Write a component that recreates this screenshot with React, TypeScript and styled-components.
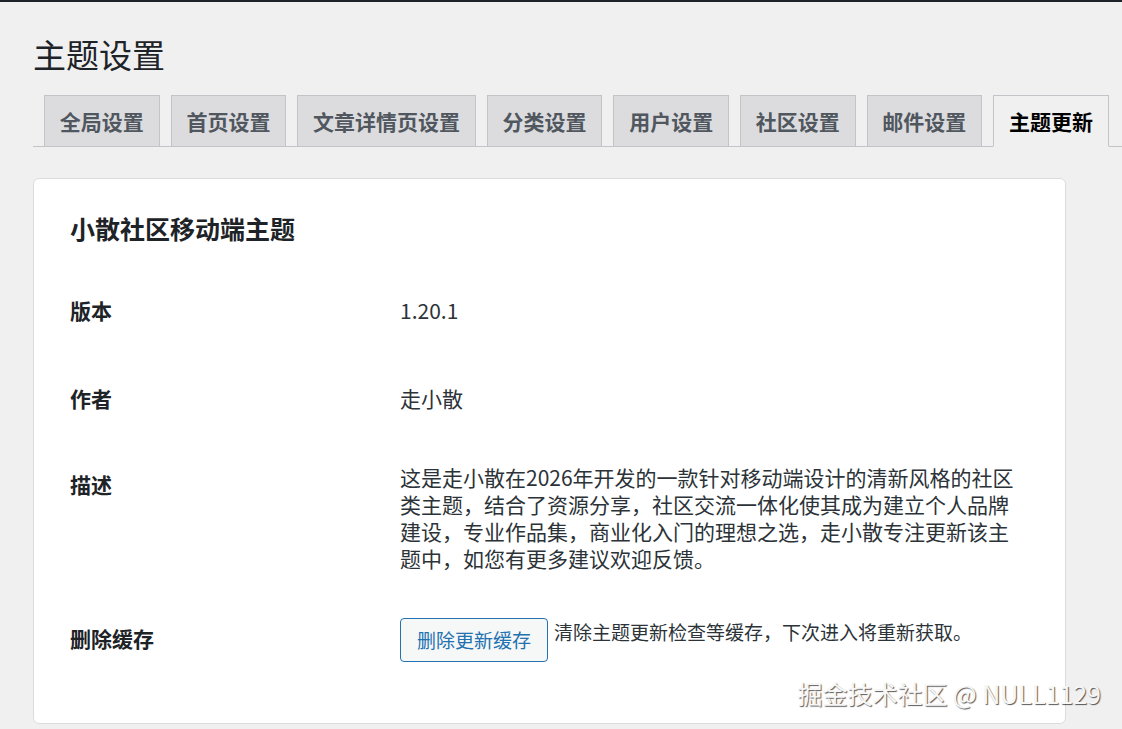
import styled, { createGlobalStyle } from "styled-components";

const GlobalStyle = createGlobalStyle`
  html, body {
    margin: 0;
    padding: 0;
    background: #f0f0f1;
  }
  body {
    font-family: "Noto Sans CJK SC", "Noto Sans", sans-serif;
    color: #2c3338;
  }
  * {
    box-sizing: border-box;
  }
`;

const tabs = [
  "全局设置",
  "首页设置",
  "文章详情页设置",
  "分类设置",
  "用户设置",
  "社区设置",
  "邮件设置",
  "主题更新",
];

const Page = styled.div`
  position: relative;
  min-height: 729px;
  border-top: 2px solid #1d2327;
  padding-left: 33px;
`;

const Heading = styled.h1`
  margin: 30px 0 19px;
  font-size: 33px;
  line-height: 44px;
  font-weight: 400;
  color: #1d2327;
`;

const TabBar = styled.nav`
  display: flex;
  border-bottom: 1px solid #c3c4c7;
`;

const Tab = styled.a<{ $active?: boolean }>`
  display: block;
  margin-left: 11px;
  margin-bottom: -1px;
  padding: 7px 14.8px;
  font-size: 21px;
  line-height: 36px;
  font-weight: 700;
  white-space: nowrap;
  color: ${(p) => (p.$active ? "#000000" : "#50575e")};
  background: ${(p) => (p.$active ? "#f0f0f1" : "#dcdcde")};
  border: 1px solid #c3c4c7;
  border-bottom-color: ${(p) => (p.$active ? "#f0f0f1" : "#c3c4c7")};
  cursor: pointer;
`;

const Card = styled.section`
  width: 1033px;
  margin-top: 31px;
  padding: 32px 36px 41px;
  background: #ffffff;
  border: 1px solid #dcdcde;
  border-radius: 6px;
`;

const CardTitle = styled.h2`
  margin: 0 0 21px;
  font-size: 25px;
  line-height: 34px;
  font-weight: 700;
  color: #1d2327;
`;

const Row = styled.div`
  display: grid;
  grid-template-columns: 330px 620px;
`;

const Label = styled.div<{ $top?: number }>`
  padding: ${(p) => p.$top ?? 30}px 0 30px;
  font-size: 21px;
  line-height: 28px;
  font-weight: 700;
  color: #1d2327;
`;

const Value = styled.div<{ $top: number }>`
  padding: ${(p) => p.$top}px 0;
  font-size: 21px;
  line-height: ${(p) => (p.$top === 30 ? 28 : 27)}px;
  color: #2c3338;
`;

const Actions = styled.div`
  display: flex;
  align-items: flex-start;
  padding-top: 24px;
`;

const Button = styled.button`
  height: 44px;
  padding: 0 16px;
  font-family: inherit;
  font-size: 19px;
  line-height: 42px;
  color: #2271b1;
  background: #f6f7f7;
  border: 1px solid #2271b1;
  border-radius: 4px;
  cursor: pointer;
`;

const Hint = styled.span`
  margin-left: 6px;
  font-size: 19px;
  line-height: 28px;
  color: #2c3338;
  white-space: nowrap;
`;

const Watermark = styled.div`
  position: absolute;
  right: 21px;
  top: 674px;
  font-size: 25px;
  line-height: 34px;
  color: #f7f7f7;
  text-shadow: 1px 1px 1px rgba(0, 0, 0, 0.65);
  white-space: nowrap;
`;

export default function App() {
  return (
    <>
      <GlobalStyle />
      <Page>
        <Heading>主题设置</Heading>
        <TabBar>
          {tabs.map((t) => (
            <Tab key={t} $active={t === "主题更新"}>
              {t}
            </Tab>
          ))}
        </TabBar>
        <Card>
          <CardTitle>小散社区移动端主题</CardTitle>
          <Row>
            <Label>版本</Label>
            <Value $top={30}>1.20.1</Value>
          </Row>
          <Row>
            <Label>作者</Label>
            <Value $top={30}>走小散</Value>
          </Row>
          <Row>
            <Label $top={28}>描述</Label>
            <Value $top={22}>
              这是走小散在2026年开发的一款针对移动端设计的清新风格的社区类主题，结合了资源分享，社区交流一体化使其成为建立个人品牌建设，专业作品集，商业化入门的理想之选，走小散专注更新该主题中，如您有更多建议欢迎反馈。
            </Value>
          </Row>
          <Row>
            <Label>删除缓存</Label>
            <Actions>
              <Button>删除更新缓存</Button>
              <Hint>清除主题更新检查等缓存，下次进入将重新获取。</Hint>
            </Actions>
          </Row>
        </Card>
        <Watermark>掘金技术社区 @ NULL1129</Watermark>
      </Page>
    </>
  );
}
